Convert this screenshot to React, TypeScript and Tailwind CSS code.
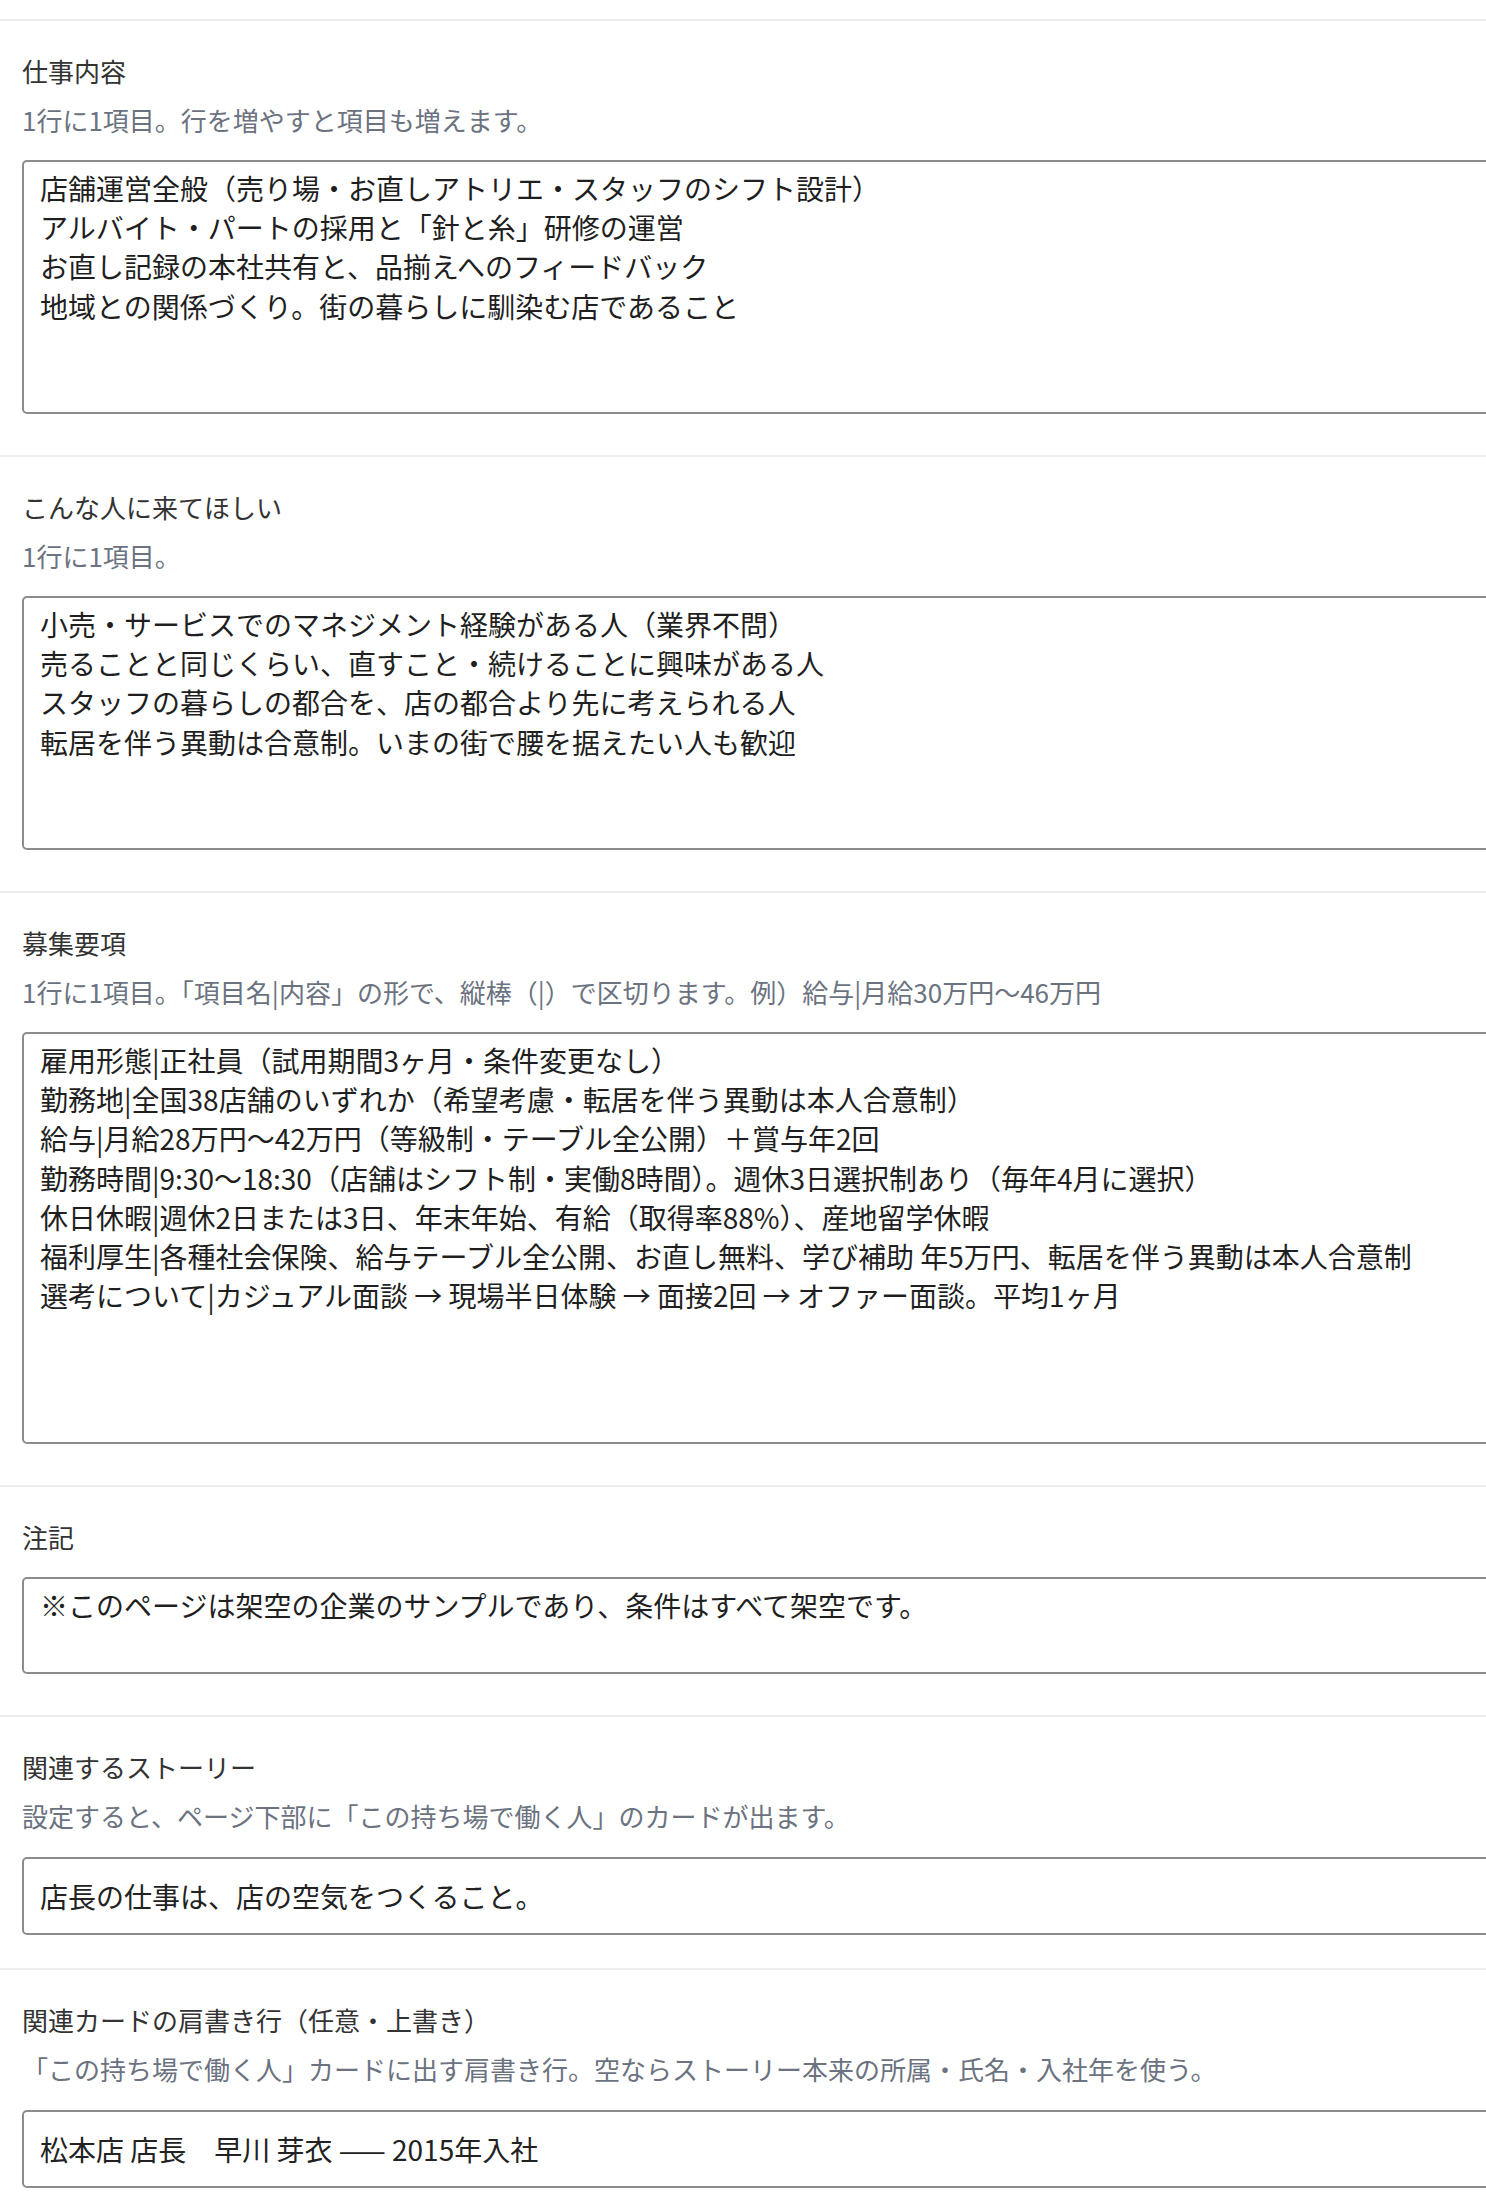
import React from 'react';

const font = { fontFamily: '"Noto Sans CJK JP", "Noto Sans", sans-serif' };

type Field = {
  label: string;
  hint?: string;
  kind: 'textarea' | 'input';
  value: string;
  height?: string;
};

const fields: Field[] = [
  {
    label: '仕事内容',
    hint: '1行に1項目。行を増やすと項目も増えます。',
    kind: 'textarea',
    height: 'h-[254px]',
    value: [
      '店舗運営全般（売り場・お直しアトリエ・スタッフのシフト設計）',
      'アルバイト・パートの採用と「針と糸」研修の運営',
      'お直し記録の本社共有と、品揃えへのフィードバック',
      '地域との関係づくり。街の暮らしに馴染む店であること',
    ].join('\n'),
  },
  {
    label: 'こんな人に来てほしい',
    hint: '1行に1項目。',
    kind: 'textarea',
    height: 'h-[254px]',
    value: [
      '小売・サービスでのマネジメント経験がある人（業界不問）',
      '売ることと同じくらい、直すこと・続けることに興味がある人',
      'スタッフの暮らしの都合を、店の都合より先に考えられる人',
      '転居を伴う異動は合意制。いまの街で腰を据えたい人も歓迎',
    ].join('\n'),
  },
  {
    label: '募集要項',
    hint: '1行に1項目。「項目名|内容」の形で、縦棒（|）で区切ります。例）給与|月給30万円〜46万円',
    kind: 'textarea',
    height: 'h-[412px]',
    value: [
      '雇用形態|正社員（試用期間3ヶ月・条件変更なし）',
      '勤務地|全国38店舗のいずれか（希望考慮・転居を伴う異動は本人合意制）',
      '給与|月給28万円〜42万円（等級制・テーブル全公開）＋賞与年2回',
      '勤務時間|9:30〜18:30（店舗はシフト制・実働8時間）。週休3日選択制あり（毎年4月に選択）',
      '休日休暇|週休2日または3日、年末年始、有給（取得率88%）、産地留学休暇',
      '福利厚生|各種社会保険、給与テーブル全公開、お直し無料、学び補助 年5万円、転居を伴う異動は本人合意制',
      '選考について|カジュアル面談 → 現場半日体験 → 面接2回 → オファー面談。平均1ヶ月',
    ].join('\n'),
  },
  {
    label: '注記',
    kind: 'textarea',
    height: 'h-[97px]',
    value: '※このページは架空の企業のサンプルであり、条件はすべて架空です。',
  },
  {
    label: '関連するストーリー',
    hint: '設定すると、ページ下部に「この持ち場で働く人」のカードが出ます。',
    kind: 'input',
    value: '店長の仕事は、店の空気をつくること。',
  },
  {
    label: '関連カードの肩書き行（任意・上書き）',
    hint: '「この持ち場で働く人」カードに出す肩書き行。空ならストーリー本来の所属・氏名・入社年を使う。',
    kind: 'input',
    value: '松本店 店長　早川 芽衣 —— 2015年入社',
  },
];

function FieldBlock({ field }: { field: Field }) {
  return (
    <section className="border-t-2 border-[#ededed] pl-[22px] pt-[32px] pb-[33px]">
      <label className="block text-[26px] leading-[36px] text-[#333333]">{field.label}</label>
      {field.hint && (
        <p className="mt-[13px] text-[26px] leading-[36px] text-[#6b7280]">{field.hint}</p>
      )}
      {field.kind === 'textarea' ? (
        <textarea
          defaultValue={field.value}
          spellCheck={false}
          style={font}
          className={`mt-[22px] mb-[8px] block w-[1540px] ${field.height} resize-none rounded-[5px] border-2 border-[#8c8c8c] bg-white px-[16px] py-[7px] text-[28px] leading-[39.2px] text-[#1f1f1f] outline-none`}
        />
      ) : (
        <input
          type="text"
          defaultValue={field.value}
          spellCheck={false}
          style={font}
          className="mt-[23px] block h-[78px] w-[1540px] rounded-[5px] border-2 border-[#8c8c8c] bg-white px-[16px] text-[28px] text-[#222222] outline-none"
        />
      )}
    </section>
  );
}

export default function App() {
  return (
    <div className="min-h-[2210px] w-full overflow-hidden bg-white pt-[19px]" style={font}>
      {fields.map(f => (
        <FieldBlock key={f.label} field={f} />
      ))}
    </div>
  );
}
